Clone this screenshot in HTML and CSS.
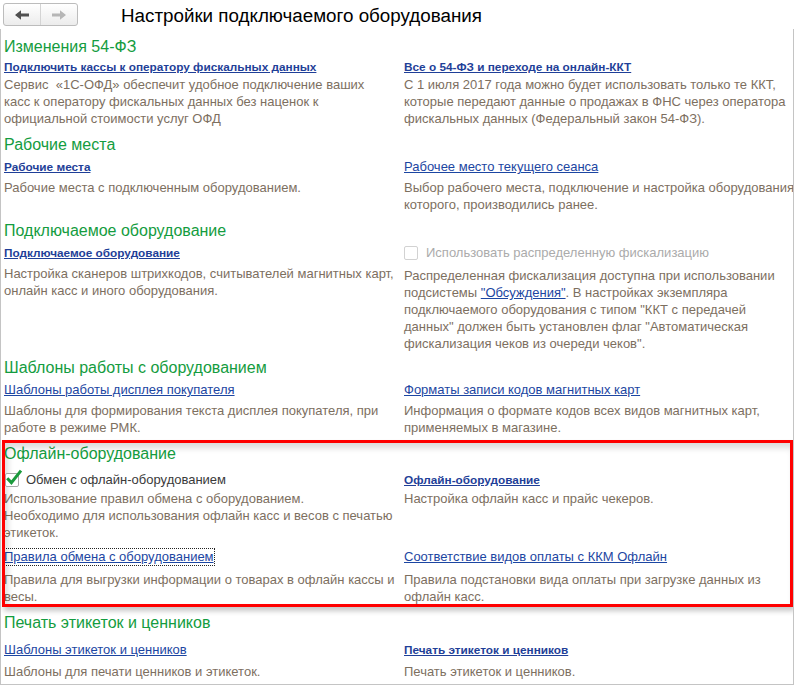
FILE: index.html
```html
<!DOCTYPE html>
<html lang="ru">
<head>
<meta charset="utf-8">
<title>Настройки подключаемого оборудования</title>
<link rel="stylesheet" href="styles.css">
</head>
<body>
<div class="toolbar">
  <div class="nav">
    <button class="nav-btn back" type="button">
      <svg width="14" height="10" viewBox="0 0 14 10"><path d="M0 5 L6 0.3 V3.4 H14 V6.6 H6 V9.7 Z" fill="#505050"/></svg>
    </button>
    <button class="nav-btn fwd" type="button">
      <svg width="14" height="10" viewBox="0 0 14 10"><path d="M14 5 L8 0.3 V3.4 H0 V6.6 H8 V9.7 Z" fill="#b6b6b6"/></svg>
    </button>
  </div>
  <h1 class="title">Настройки подключаемого оборудования</h1>
</div>
<div class="window">
  <section class="sec">
    <h2 class="sec-title">Изменения 54-ФЗ</h2>
    <div class="grid g-first">
      <div class="item">
        <a class="link bold" href="#">Подключить кассы к оператору фискальных данных</a>
        <p class="desc">Сервис &nbsp;«1С-ОФД» обеспечит удобное подключение ваших<br>касс к оператору фискальных данных без наценок к<br>официальной стоимости услуг ОФД</p>
      </div>
      <div class="item">
        <a class="link bold" href="#">Все о 54-ФЗ и переходе на онлайн-ККТ</a>
        <p class="desc">С 1 июля 2017 года можно будет использовать только те ККТ,<br>которые передают данные о продажах в ФНС через оператора<br>фискальных данных (Федеральный закон 54-ФЗ).</p>
      </div>
    </div>
  </section>

  <section class="sec">
    <h2 class="sec-title">Рабочие места</h2>
    <div class="grid">
      <div class="item">
        <a class="link bold" href="#">Рабочие места</a>
        <p class="desc">Рабочие места с подключенным оборудованием.</p>
      </div>
      <div class="item">
        <a class="link" href="#">Рабочее место текущего сеанса</a>
        <p class="desc">Выбор рабочего места, подключение и настройка оборудования<br>которого, производились ранее.</p>
      </div>
    </div>
  </section>

  <section class="sec">
    <h2 class="sec-title">Подключаемое оборудование</h2>
    <div class="grid">
      <div class="item">
        <a class="link bold" href="#">Подключаемое оборудование</a>
        <p class="desc">Настройка сканеров штрихкодов, считывателей магнитных карт,<br>онлайн касс и иного оборудования.</p>
      </div>
      <div class="item item-check">
        <label class="check disabled"><span class="box"></span>Использовать распределенную фискализацию</label>
        <p class="desc">Распределенная фискализация доступна при использовании<br>подсистемы <a class="inline-link" href="#">"Обсуждения"</a>. В настройках экземпляра<br>подключаемого оборудования с типом "ККТ с передачей<br>данных" должен быть установлен флаг "Автоматическая<br>фискализация чеков из очереди чеков".</p>
      </div>
    </div>
  </section>

  <section class="sec sec-after-long">
    <h2 class="sec-title">Шаблоны работы с оборудованием</h2>
    <div class="grid">
      <div class="item">
        <a class="link" href="#">Шаблоны работы дисплея покупателя</a>
        <p class="desc">Шаблоны для формирования текста дисплея покупателя, при<br>работе в режиме РМК.</p>
      </div>
      <div class="item">
        <a class="link" href="#">Форматы записи кодов магнитных карт</a>
        <p class="desc">Информация о формате кодов всех видов магнитных карт,<br>применяемых в магазине.</p>
      </div>
    </div>
  </section>

  <section class="sec sec-marked">
    <div class="frame" aria-hidden="true"></div>
    <h2 class="sec-title">Офлайн-оборудование</h2>
    <div class="grid g-offline">
      <div class="item item-tight">
        <label class="check checked"><span class="box"><svg class="tick" width="18" height="17" viewBox="0 0 18 17"><path d="M2.2 9.2 L6.4 13.6 L16 1.6" fill="none" stroke="#1a9a3c" stroke-width="3"/></svg></span>Обмен с офлайн-оборудованием</label>
        <p class="desc">Использование правил обмена с оборудованием.<br>Необходимо для использования офлайн касс и весов с печатью<br>этикеток.</p>
      </div>
      <div class="item item-tight">
        <a class="link bold" href="#">Офлайн-оборудование</a>
        <p class="desc">Настройка офлайн касс и прайс чекеров.</p>
      </div>
      <div class="item item-loose">
        <a class="link focused" href="#">Правила обмена с оборудованием</a>
        <p class="desc">Правила для выгрузки информации о товарах в офлайн кассы и<br>весы.</p>
      </div>
      <div class="item item-loose">
        <a class="link" href="#">Соответствие видов оплаты с ККМ Офлайн</a>
        <p class="desc">Правила подстановки вида оплаты при загрузке данных из<br>офлайн касс.</p>
      </div>
    </div>
  </section>

  <section class="sec">
    <h2 class="sec-title">Печать этикеток и ценников</h2>
    <div class="grid g-last">
      <div class="item">
        <a class="link" href="#">Шаблоны этикеток и ценников</a>
        <p class="desc">Шаблоны для печати ценников и этикеток.</p>
      </div>
      <div class="item">
        <a class="link bold" href="#">Печать этикеток и ценников</a>
        <p class="desc">Печать этикеток и ценников.</p>
      </div>
    </div>
  </section>
</div>
</body>
</html>
```

FILE: styles.css
```css
html, body {
  margin: 0;
  padding: 0;
  background: #ffffff;
}

body {
  font-family: "Liberation Sans", Arial, sans-serif;
  font-size: 13px;
  color: #333333;
  width: 795px;
  height: 685px;
  overflow: hidden;
}

.toolbar {
  height: 29px;
  display: flex;
  align-items: flex-start;
  padding: 3px 0 0 3px;
  box-sizing: border-box;
}

.nav {
  display: flex;
  height: 23px;
  border: 1px solid #bcbcbc;
  border-radius: 3px;
  box-sizing: border-box;
  overflow: hidden;
  background: linear-gradient(#ffffff, #ececec);
}

.nav-btn {
  width: 36px;
  height: 21px;
  padding: 0;
  margin: 0;
  border: 0;
  background: transparent;
  display: flex;
  align-items: center;
  justify-content: center;
}

.nav-btn.back {
  border-right: 1px solid #d4d4d4;
  width: 37px;
}

.title {
  margin: 0 0 0 43px;
  font-size: 18.8px;
  font-weight: normal;
  color: #000000;
  line-height: 26px;
}

.window {
  width: 794px;
  height: 656px;
  box-sizing: border-box;
  border-left: 1px solid #c4c4c4;
  border-right: 1px solid #c4c4c4;
  border-bottom: 1px solid #c4c4c4;
  padding-left: 3px;
  overflow: hidden;
}

.sec {
  margin-top: 8px;
}

.sec-after-long {
  margin-top: 6px;
}

.sec-title {
  margin: 0;
  font-size: 16px;
  line-height: 20px;
  font-weight: normal;
  color: #149c40;
}

.grid {
  display: grid;
  grid-template-columns: 400px 1fr;
  row-gap: 7px;
  margin-top: 3px;
}

.item {
  min-width: 0;
}

.link {
  display: inline-block;
  line-height: 18px;
  height: 18px;
  color: #1c46a2;
  text-decoration: underline;
  font-size: 13px;
}

.link.bold {
  font-weight: bold;
  font-size: 11.8px;
  color: #1f3f98;
}

.link.focused {
  outline: 1px dotted #222222;
  outline-offset: -1px;
  margin-left: -1px;
  padding: 0 1px;
}

.desc {
  margin: 3px 0 0 0;
  line-height: 17px;
  color: #7d6f5f;
  white-space: nowrap;
}

.inline-link {
  color: #1c46a2;
  text-decoration: underline;
}

.check {
  display: flex;
  align-items: center;
  height: 18px;
  line-height: 18px;
}

.check .box {
  position: relative;
  width: 14px;
  height: 14px;
  box-sizing: border-box;
  border: 1px solid #a8a8a8;
  border-radius: 2px;
  background: #ffffff;
  margin-right: 8px;
  flex: none;
}

.check.disabled {
  color: #ababab;
}

.check.disabled .box {
  border-color: #d2d2d2;
}

.item-check .desc {
  margin-top: 5px;
}

.check.checked {
  color: #3a3a3a;
  margin-left: 1px;
}

.check.checked .box {
  margin-right: 7px;
}

.tick {
  position: absolute;
  left: -1px;
  top: -5px;
}

.g-first {
  margin-top: 1px;
}

.g-first .desc {
  margin-top: 0;
}

.g-offline {
  margin-top: 7px;
}

.item-tight .desc {
  margin-top: 1px;
}

.item-loose .desc {
  margin-top: 5px;
}

.g-last {
  margin-top: 8px;
}

.g-last .desc {
  margin-top: 4px;
}

.sec-marked {
  position: relative;
}

.frame {
  position: absolute;
  left: -2px;
  right: 0;
  top: -4px;
  bottom: -2px;
  border: 3px solid #ff0000;
  box-shadow: 2px 4px 5px rgba(0, 0, 0, 0.22), inset 3px 5px 6px rgba(0, 0, 0, 0.14);
  pointer-events: none;
}
```
